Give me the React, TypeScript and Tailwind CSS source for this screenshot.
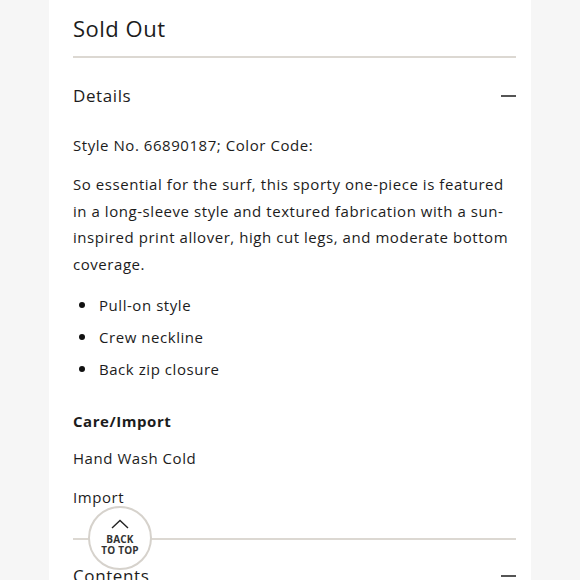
const bullets = ['Pull-on style', 'Crew neckline', 'Back zip closure'];

export default function App() {
    return (
        <div
            className="flex h-[580px] w-[580px] justify-center overflow-hidden bg-[#f6f6f6] text-[#1c1c1c]"
            style={{ fontFamily: '"Open Sans", Lato, sans-serif' }}
        >
            <div className="relative w-[482px] shrink-0 bg-white pl-6 pr-[15px]">
                <h1 className="pt-[13px] text-[22px] leading-[30px] tracking-[0.5px]">Sold Out</h1>
                <div className="mt-[13px] h-[2px] bg-[#dcd8d2]" />

                <section>
                    <div className="flex items-center justify-between pt-[26px]">
                        <h2 className="text-[17px] leading-[24px] tracking-[0.6px]">Details</h2>
                        <span className="h-[2px] w-[15px] bg-[#555]" />
                    </div>

                    <div className="text-[15px] tracking-[0.55px]">
                        <p className="pt-[24px] leading-[26px]">Style No. 66890187; Color Code:</p>
                        <p className="pt-[13px] leading-[26.5px]">
                            So essential for the surf, this sporty one-piece is featured in a long-sleeve style and
                            textured fabrication with a sun-inspired print allover, high cut legs, and moderate bottom
                            coverage.
                        </p>
                        <ul className="flex flex-col gap-[6px] pt-[15px]">
                            {bullets.map((b) => (
                                <li key={b} className="flex items-center leading-[26px]">
                                    <span className="ml-[6px] mr-[14px] h-[6px] w-[6px] rounded-full bg-[#111]" />
                                    {b}
                                </li>
                            ))}
                        </ul>
                        <h3 className="pt-[26px] font-bold leading-[26px]">Care/Import</h3>
                        <p className="pt-[11px] leading-[26px]">Hand Wash Cold</p>
                        <p className="pt-[13px] leading-[26px]">Import</p>
                    </div>
                </section>

                <div className="mt-[28px] h-[2px] bg-[#dcd8d2]" />

                <div className="flex items-center justify-between pt-[24px]">
                    <h2 className="text-[17px] leading-[24px] tracking-[0.6px]">Contents</h2>
                    <span className="h-[2px] w-[15px] bg-[#555]" />
                </div>

                {/* back to top floats over the divider */}
                <button className="absolute left-[39px] top-[506px] flex h-[64px] w-[64px] flex-col items-center justify-center rounded-full border-2 border-[#d6d2cc] bg-white">
                    <svg width="18" height="10" viewBox="0 0 18 10" className="-mt-[2px] mb-[5px]">
                        <polyline points="1,9 9,1.5 17,9" fill="none" stroke="#222" strokeWidth="1.4" />
                    </svg>
                    <span className="text-[10px] font-bold leading-[11px] tracking-[0.2px] text-[#333]">
                        BACK
                        <br />
                        TO TOP
                    </span>
                </button>
            </div>
        </div>
    );
}
